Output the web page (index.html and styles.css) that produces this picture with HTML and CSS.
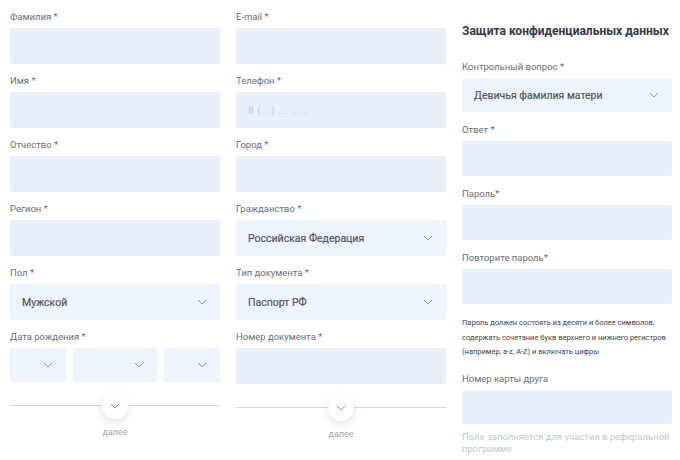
FILE: index.html
```html
<!DOCTYPE html>
<html lang="ru">
<head>
    <meta charset="UTF-8">
    <title>Регистрация</title>
    <link rel="stylesheet" href="styles.css">
</head>
<body>

<div class="form">
    <!-- первая колонка -->
    <div class="column">
        <div class="field">
            <label>Фамилия *</label>
            <div class="input"></div>
        </div>
        <div class="field">
            <label>Имя *</label>
            <div class="input"></div>
        </div>
        <div class="field">
            <label>Отчество *</label>
            <div class="input"></div>
        </div>
        <div class="field">
            <label>Регион *</label>
            <div class="input"></div>
        </div>
        <div class="field">
            <label>Пол *</label>
            <div class="select"><span>Мужской</span>
                <svg class="chevron" width="10" height="6" viewBox="0 0 10 6"><polyline points="1,1 5,5 9,1"/></svg>
            </div>
        </div>
        <div class="field">
            <label>Дата рождения *</label>
            <div class="date-row">
                <div class="select small"><svg class="chevron" width="10" height="6" viewBox="0 0 10 6"><polyline points="1,1 5,5 9,1"/></svg></div>
                <div class="select wide"><svg class="chevron" width="10" height="6" viewBox="0 0 10 6"><polyline points="1,1 5,5 9,1"/></svg></div>
                <div class="select small"><svg class="chevron" width="10" height="6" viewBox="0 0 10 6"><polyline points="1,1 5,5 9,1"/></svg></div>
            </div>
        </div>
        <div class="next">
            <div class="next-line">
                <button class="next-btn"><svg width="10" height="6" viewBox="0 0 10 6"><polyline points="1,1 5,5 9,1"/></svg></button>
            </div>
            <span>далее</span>
        </div>
    </div>

    <!-- вторая колонка -->
    <div class="column">
        <div class="field">
            <label>E-mail *</label>
            <div class="input"></div>
        </div>
        <div class="field">
            <label>Телефон *</label>
            <div class="input placeholder">8 (...) ... .. ..</div>
        </div>
        <div class="field">
            <label>Город *</label>
            <div class="input"></div>
        </div>
        <div class="field">
            <label>Гражданство *</label>
            <div class="select"><span>Российская Федерация</span>
                <svg class="chevron" width="10" height="6" viewBox="0 0 10 6"><polyline points="1,1 5,5 9,1"/></svg>
            </div>
        </div>
        <div class="field">
            <label>Тип документа *</label>
            <div class="select"><span>Паспорт РФ</span>
                <svg class="chevron" width="10" height="6" viewBox="0 0 10 6"><polyline points="1,1 5,5 9,1"/></svg>
            </div>
        </div>
        <div class="field">
            <label>Номер документа *</label>
            <div class="input"></div>
        </div>
        <div class="next">
            <div class="next-line">
                <button class="next-btn"><svg width="10" height="6" viewBox="0 0 10 6"><polyline points="1,1 5,5 9,1"/></svg></button>
            </div>
            <span>далее</span>
        </div>
    </div>

    <!-- третья колонка -->
    <div class="column privacy">
        <h2>Защита конфиденциальных данных</h2>
        <div class="field">
            <label>Контрольный вопрос *</label>
            <div class="select"><span>Девичья фамилия матери</span>
                <svg class="chevron" width="10" height="6" viewBox="0 0 10 6"><polyline points="1,1 5,5 9,1"/></svg>
            </div>
        </div>
        <div class="field">
            <label>Ответ *</label>
            <div class="input"></div>
        </div>
        <div class="field">
            <label>Пароль*</label>
            <div class="input"></div>
        </div>
        <div class="field">
            <label>Повторите пароль*</label>
            <div class="input"></div>
        </div>
        <p class="hint">Пароль должен состоять из десяти и более символов, содержать сочетание букв верхнего и нижнего регистров (например, a-z, A-Z) и включать цифры</p>
        <div class="field friend">
            <label>Номер карты друга</label>
            <div class="input"></div>
        </div>
        <p class="note">Поле заполняется для участия в реферальной программе</p>
    </div>
</div>

</body>
</html>
```

FILE: styles.css
```css
body {
    margin: 0;
    padding: 0;
    background-color: #fff;
    font-family: Roboto, "Liberation Sans", sans-serif;
}
.form {
    display: flex;
    gap: 16px;
    padding: 11px 0 0 10px;
}
.column {
    width: 210px;
    display: flex;
    flex-direction: column;
}
.field {
    display: flex;
    flex-direction: column;
    gap: 5px;
    margin-bottom: 11px;
}
.field label {
    font-size: 9.5px;
    line-height: 12px;
    color: #6a6e75;
}
.input {
    height: 36px;
    background-color: #e8effa;
    border-radius: 3px;
    box-sizing: border-box;
    padding: 0 12px;
    display: flex;
    align-items: center;
}
.input.placeholder {
    font-size: 10px;
    letter-spacing: 0.6px;
    color: #c3c9d3;
}
.select {
    height: 36px;
    background-color: #eef4fd;
    border-radius: 3px;
    box-sizing: border-box;
    padding: 0 13px 0 12px;
    display: flex;
    align-items: center;
    justify-content: space-between;
    font-size: 10.5px;
    font-weight: 400;
    color: #4f5665;
    -webkit-text-stroke: 0.2px #4f5665;
}
.chevron {
    margin-left: auto;
}
svg polyline {
    fill: none;
    stroke: #8b93a2;
    stroke-width: 1;
}
.date-row {
    display: flex;
    gap: 7px;
}
.date-row .select {
    height: 34px;
}
.date-row .small {
    width: 56px;
}
.date-row .wide {
    flex: 1;
}
.next {
    display: flex;
    flex-direction: column;
    align-items: center;
    margin-top: 12px;
}
.next-line {
    width: 100%;
    height: 1px;
    background-color: #d5d7db;
    display: flex;
    justify-content: center;
    align-items: center;
}
.next-btn {
    width: 26px;
    height: 26px;
    border-radius: 50%;
    border: none;
    padding: 0;
    background-color: #fff;
    box-shadow: 0 3px 10px rgba(0, 0, 0, 0.12);
    display: flex;
    align-items: center;
    justify-content: center;
}
.next span {
    margin-top: 21px;
    font-size: 9px;
    color: #a4a8ae;
}
.privacy {
    padding-top: 12px;
}
.privacy h2 {
    margin: 0 0 22px;
    font-size: 12px;
    line-height: 16px;
    font-weight: 700;
    white-space: nowrap;
    color: #333a46;
}
.privacy .field {
    gap: 5px;
    margin-bottom: 12px;
}
.privacy .field .input {
    height: 35px;
}
.privacy .field .select {
    height: 34px;
}
.privacy .field.friend {
    margin-bottom: 7px;
}
.privacy .field.friend .input {
    height: 34px;
}
.hint {
    margin: 0 0 13px;
    font-size: 7.5px;
    line-height: 14.5px;
    color: #3c4049;
}
.note {
    margin: 0;
    font-size: 9.5px;
    line-height: 12px;
    color: #c3c7cd;
}
```
